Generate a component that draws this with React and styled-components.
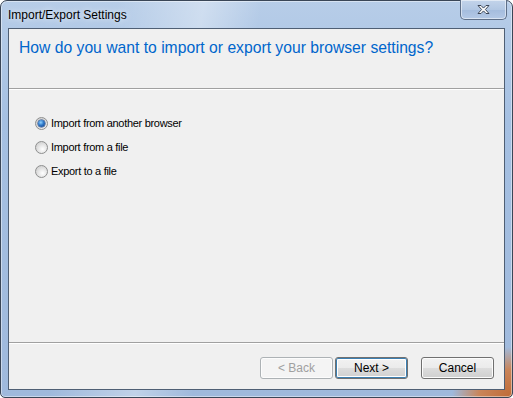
import React from "react";
import styled, { createGlobalStyle } from "styled-components";

const GlobalStyle = createGlobalStyle`
  html, body {
    margin: 0;
    padding: 0;
    background: #ffffff;
  }
  body {
    font-family: "Liberation Sans", Arial, sans-serif;
  }
`;

const options = [
  { id: "browser", label: "Import from another browser" },
  { id: "import-file", label: "Import from a file" },
  { id: "export-file", label: "Export to a file" },
];

export default function App() {
  const [choice, setChoice] = React.useState("browser");

  return (
    <>
      <GlobalStyle />
      <Window>
        <TitleBar>
          <Caption>Import/Export Settings</Caption>
          <CloseButton aria-label="Close">
            <svg width="15" height="11" viewBox="0 0 15 11">
              <path
                d="M2 1.5h3l2.5 2.6L10 1.5h3L9.4 5.5 13 9.5h-3L7.5 6.9 5 9.5H2l3.6-4z"
                fill="#ffffff"
                stroke="#3b4556"
                strokeWidth="1"
                strokeLinejoin="round"
              />
            </svg>
          </CloseButton>
        </TitleBar>
        <Client>
          <Header>
            <Heading>How do you want to import or export your browser settings?</Heading>
          </Header>
          <Divider />
          <Body>
            {options.map((opt) => (
              <RadioRow key={opt.id} onClick={() => setChoice(opt.id)}>
                <RadioDot $checked={choice === opt.id} />
                <span>{opt.label}</span>
              </RadioRow>
            ))}
          </Body>
          <Divider />
          <Footer>
            <ButtonGroup>
              <Button disabled>&lt; Back</Button>
              <Button $default>Next &gt;</Button>
            </ButtonGroup>
            <Button>Cancel</Button>
          </Footer>
        </Client>
      </Window>
    </>
  );
}

const Window = styled.div`
  box-sizing: border-box;
  width: 513px;
  height: 398px;
  display: flex;
  flex-direction: column;
  padding: 0 7px 7px 7px;
  border: 1px solid #3a4657;
  border-radius: 7px 7px 5px 5px;
  background:
    radial-gradient(ellipse 60px 50px at 100% 100%, #c06a36 0%, #c9855a 55%, rgba(201, 133, 90, 0) 100%),
    linear-gradient(100deg, rgba(255, 255, 255, 0) 20%, rgba(255, 255, 255, 0.35) 35%, rgba(255, 255, 255, 0) 45%),
    linear-gradient(180deg, #b7cde8 0%, #a5c0e2 30%, #9fb9dc 100%);
  box-shadow: inset 0 0 0 1px rgba(255, 255, 255, 0.45);
`;

const TitleBar = styled.div`
  height: 27px;
  display: flex;
  align-items: flex-start;
  justify-content: space-between;
`;

const Caption = styled.div`
  padding-top: 7px;
  font-size: 12px;
  color: #000000;
  text-shadow: 0 0 6px rgba(255, 255, 255, 0.9);
`;

const CloseButton = styled.div`
  box-sizing: border-box;
  width: 47px;
  height: 20px;
  margin-top: -1px;
  margin-right: -2px;
  display: flex;
  align-items: center;
  justify-content: center;
  border: 1px solid #5e6f88;
  border-top: none;
  border-radius: 0 0 5px 5px;
  background: linear-gradient(180deg, #c3d4ea 0%, #b2c7e3 50%, #a4bcdd 51%, #b4c9e6 100%);
  box-shadow: inset 0 0 0 1px rgba(255, 255, 255, 0.5);
`;

const Client = styled.div`
  flex: 1;
  display: flex;
  flex-direction: column;
  border: 1px solid #4f5f74;
  background: #f0f0f0;
  font-size: 12px;
  color: #000000;
`;

const Header = styled.div`
  height: 59px;
  padding: 10px 0 0 10px;
  box-sizing: border-box;
`;

const Heading = styled.div`
  font-size: 15.7px;
  color: #0066cc;
`;

const Divider = styled.div`
  height: 1px;
  border-top: 1px solid #a0a0a0;
  background: #ffffff;
`;

const Body = styled.div`
  flex: 1;
  display: flex;
  flex-direction: column;
  gap: 10px;
  padding: 26px 26px;
`;

const RadioRow = styled.label`
  display: flex;
  align-items: center;
  gap: 3px;
  height: 14px;
  font-size: 11px;
  letter-spacing: -0.3px;
  cursor: default;
`;

const RadioDot = styled.span`
  position: relative;
  box-sizing: border-box;
  width: 13px;
  height: 13px;
  border-radius: 50%;
  border: 1px solid #8e8f8f;
  background: radial-gradient(circle at 60% 65%, #ffffff 0%, #e8e8e8 40%, #c4c4c4 100%);
  &::after {
    content: "";
    position: absolute;
    left: 2px;
    top: 2px;
    width: 7px;
    height: 7px;
    border-radius: 50%;
    display: ${(p) => (p.$checked ? "block" : "none")};
    background: radial-gradient(circle at 40% 35%, #8fd2ff 0%, #2f78c8 45%, #123578 100%);
    box-shadow: 0 0 0 0.5px #1b3f78;
  }
`;

const Footer = styled.div`
  height: 45px;
  box-sizing: border-box;
  display: flex;
  justify-content: flex-end;
  gap: 13px;
  padding: 13px 10px 0 0;
`;

const ButtonGroup = styled.div`
  display: flex;
  gap: 2px;
`;

const Button = styled.button`
  box-sizing: border-box;
  width: 73px;
  height: 22px;
  padding: 0;
  font-family: "Liberation Sans", Arial, sans-serif;
  font-size: 12px;
  color: ${(p) => (p.disabled ? "#a0a0a0" : "#000000")};
  border: 1px solid ${(p) => (p.disabled ? "#adb2b5" : "#707070")};
  border-radius: 3px;
  background: ${(p) =>
    p.disabled
      ? "#f4f4f4"
      : "linear-gradient(180deg, #f2f2f2 0%, #ebebeb 50%, #dddddd 51%, #cfcfcf 100%)"};
  box-shadow: ${(p) =>
    p.$default ? "inset 0 0 0 1px #3c7fb1, inset 0 0 0 2px #ffffff" : "inset 0 0 0 1px #fcfcfc"};
`;
